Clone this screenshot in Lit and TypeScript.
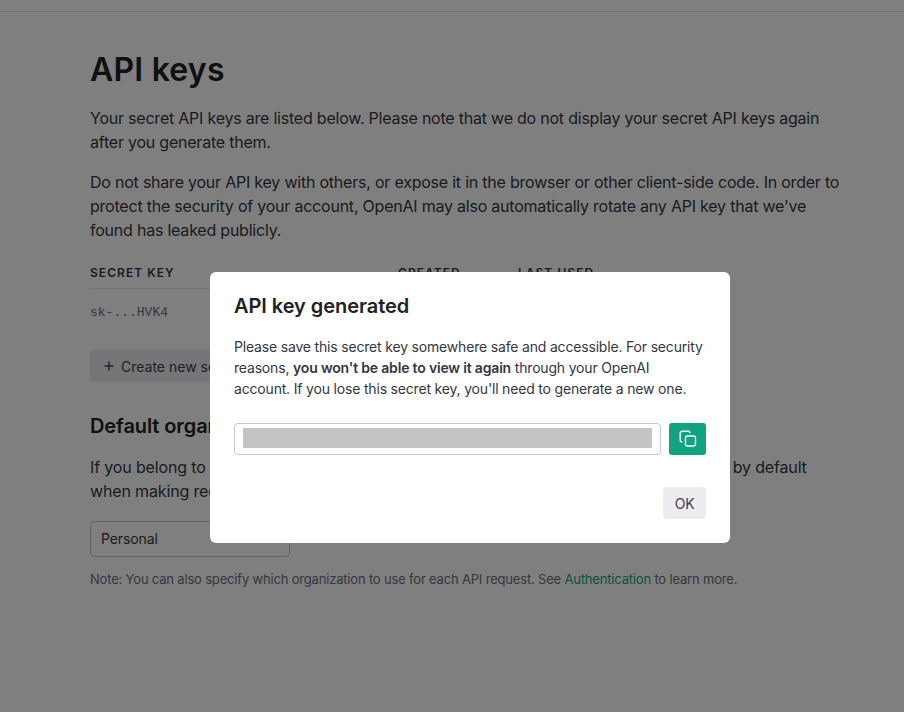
import { LitElement, html, css } from 'lit';
import { customElement } from 'lit/decorators.js';

@customElement('app-root')
export class AppRoot extends LitElement {
  static styles = css`
    :host {
      display: block;
      height: 712px;
      overflow: hidden;
      background: #fff;
      font-family: Inter, "Liberation Sans", sans-serif;
      color: #353740;
    }
    .topbar {
      height: 11px;
      border-bottom: 1px solid #e5e5e5;
    }
    .page {
      width: 752px;
      padding: 38px 0 0 90px;
    }
    h1 {
      margin: 0 0 16px;
      font-size: 32px;
      line-height: 40px;
      font-weight: 600;
      letter-spacing: 0.2px;
      color: #202123;
    }
    p {
      margin: 0 0 16px;
      font-size: 16px;
      line-height: 24px;
      letter-spacing: -0.22px;
    }
    table {
      margin-top: 23px;
      width: 560px;
      border-collapse: collapse;
    }
    th {
      padding: 0 0 7px;
      text-align: left;
      font-size: 12px;
      line-height: 16px;
      font-weight: 600;
      letter-spacing: 1.05px;
      text-transform: uppercase;
      border-bottom: 1px solid #e5e5e5;
    }
    th:nth-child(1) { width: 308px; }
    th:nth-child(2) { width: 120px; }
    td {
      padding: 14px 0;
      font-family: "Liberation Mono", monospace;
      font-size: 13px;
      line-height: 20px;
      color: #6e6e80;
    }
    .create {
      display: inline-flex;
      align-items: center;
      gap: 4px;
      margin-top: 13px;
      height: 32px;
      width: 250px;
      padding: 0 11px;
      border-radius: 4px;
      background: #ececf1;
      font-size: 14px;
      color: #40414f;
      box-sizing: border-box;
    }
    h2 {
      margin: 30px 0 15px;
      font-size: 20px;
      line-height: 28px;
      font-weight: 600;
      letter-spacing: -0.1px;
      color: #202123;
    }
    .org p {
      width: 730px;
      margin-bottom: 18px;
      letter-spacing: -0.15px;
    }
    .select {
      box-sizing: border-box;
      width: 200px;
      height: 36px;
      display: flex;
      align-items: center;
      padding: 0 10px 2px;
      border: 1px solid #c5c5d2;
      border-radius: 4px;
      font-size: 14px;
      letter-spacing: -0.1px;
    }
    .note {
      margin: 12px 0 0;
      font-size: 13px;
      line-height: 20px;
      letter-spacing: -0.18px;
      color: #6e6e80;
    }
    .note a {
      color: #10a37f;
    }
    .overlay {
      position: fixed;
      inset: 0;
      display: flex;
      justify-content: center;
      align-items: flex-start;
      padding: 272px 0 0 36px;
      background: rgba(0, 0, 0, 0.5);
    }
    .modal {
      box-sizing: border-box;
      width: 520px;
      height: 271px;
      padding: 20px 24px;
      border-radius: 6px;
      background: #fff;
    }
    .modal h3 {
      margin: 0 0 16px;
      font-size: 20px;
      line-height: 28px;
      font-weight: 600;
      letter-spacing: -0.05px;
      color: #202123;
    }
    .modal p {
      margin: 0;
      font-size: 14px;
      line-height: 21px;
      letter-spacing: -0.18px;
    }
    .modal b {
      font-weight: 600;
    }
    .key-row {
      display: flex;
      gap: 8px;
      margin-top: 24px;
    }
    .key {
      box-sizing: border-box;
      width: 427px;
      height: 32px;
      padding: 4px 8px;
      border: 1px solid #c5c5d2;
      border-radius: 4px;
    }
    .key div {
      height: 20px;
      background: #c4c4c4;
    }
    .copy {
      width: 37px;
      height: 32px;
      display: flex;
      align-items: center;
      justify-content: center;
      border-radius: 3px;
      background: #10a37f;
      color: #fff;
    }
    .actions {
      display: flex;
      justify-content: flex-end;
      margin-top: 32px;
    }
    .ok {
      width: 43px;
      height: 32px;
      display: flex;
      align-items: center;
      justify-content: center;
      border-radius: 4px;
      background: #ececf1;
      font-size: 14px;
      letter-spacing: -0.2px;
      color: #40414f;
    }
  `;

  render() {
    return html`
      <div class="topbar"></div>
      <div class="page">
        <h1>API keys</h1>
        <p>Your secret API keys are listed below. Please note that we do not display your secret API keys again after you generate them.</p>
        <p>Do not share your API key with others, or expose it in the browser or other client-side code. In order to protect the security of your account, OpenAI may also automatically rotate any API key that we've found has leaked publicly.</p>
        <table>
          <thead><tr><th>Secret key</th><th>Created</th><th>Last used</th></tr></thead>
          <tbody><tr><td>sk-...HVK4</td><td></td><td></td></tr></tbody>
        </table>
        <div class="create">
          <svg width="16" height="16" viewBox="0 0 16 16" fill="none" stroke="currentColor" stroke-width="1.4"><path d="M8 3.5v9M3.5 8h9" /></svg>
          Create new secret key
        </div>
        <div class="org">
          <h2>Default organization</h2>
          <p>If you belong to multiple organizations, this setting controls which organization is used by default when making requests with the API keys above.</p>
          <div class="select">Personal</div>
          <div class="note">Note: You can also specify which organization to use for each API request. See <a>Authentication</a> to learn more.</div>
        </div>
      </div>
      <div class="overlay">
        <div class="modal">
          <h3>API key generated</h3>
          <p>Please save this secret key somewhere safe and accessible. For security reasons, <b>you won't be able to view it again</b> through your OpenAI account. If you lose this secret key, you'll need to generate a new one.</p>
          <div class="key-row">
            <div class="key"><div></div></div>
            <div class="copy">
              <svg width="18" height="18" viewBox="0 0 18 18" fill="none" stroke="currentColor" stroke-width="1.4">
                <rect x="6.5" y="6" width="10" height="10" rx="2" />
                <path d="M3.3 12A1.8 1.8 0 0 1 1.2 10V3.3A2 2 0 0 1 3.2 1.3H9.2A1.8 1.8 0 0 1 11 3.2" />
              </svg>
            </div>
          </div>
          <div class="actions"><div class="ok">OK</div></div>
        </div>
      </div>
    `;
  }
}
